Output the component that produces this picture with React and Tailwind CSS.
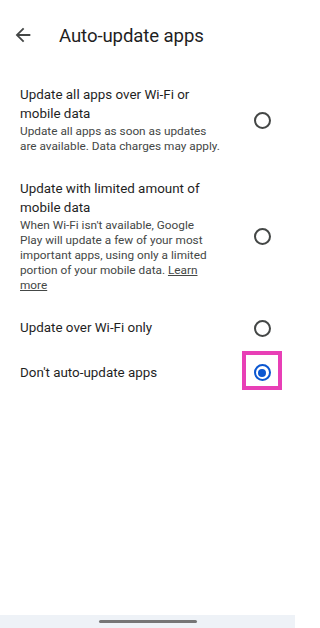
const options = [
  {
    title: ["Update all apps over Wi-Fi or", "mobile data"],
    sub: ["Update all apps as soon as updates", "are available. Data charges may apply."],
  },
  {
    title: ["Update with limited amount of", "mobile data"],
    sub: [
      "When Wi-Fi isn't available, Google",
      "Play will update a few of your most",
      "important apps, using only a limited",
      "portion of your mobile data.",
    ],
    learn: true,
  },
  { title: ["Update over Wi-Fi only"] },
  { title: ["Don't auto-update apps"], selected: true },
];

function Radio({ selected }) {
  if (selected) {
    return (
      <div className="relative flex h-[18px] w-[18px] items-center justify-center">
        <div className="flex h-[17px] w-[17px] items-center justify-center rounded-full border-2 border-[#0b57d0]">
          <div className="h-[8px] w-[8px] rounded-full bg-[#0b57d0]" />
        </div>
        {/* highlight box drawn over the selected radio */}
        <div className="absolute left-[-11px] top-[-13px] h-[39px] w-[40px] border-[4px] border-[#e83fb6]" />
      </div>
    );
  }
  return (
    <div className="flex h-[18px] w-[18px] items-center justify-center">
      <div className="h-[17px] w-[17px] rounded-full border-2 border-[#444746]" />
    </div>
  );
}

export default function App() {
  return (
    <div
      className="flex h-[628px] w-[295px] flex-col bg-white text-[#1f1f1f]"
      style={{ fontFamily: "Roboto, 'Noto Sans', Arial, sans-serif" }}
    >
      <div className="flex h-[73px] items-start gap-[25px] pl-[12px] pt-[24px]">
        <svg width="22" height="22" viewBox="0 0 24 24" fill="#444746">
          <path d="M20 11H7.83l5.59-5.59L12 4l-8 8 8 8 1.41-1.41L7.83 13H20v-2z" />
        </svg>
        <h1 className="text-[18.6px] leading-[24px] tracking-[-0.1px]">Auto-update apps</h1>
      </div>

      <div className="flex flex-col">
        {options.map((o, i) => (
          <div key={i} className="flex items-center py-[13px] pl-[20px] pr-[24px]">
            <div className="w-[210px] whitespace-nowrap">
              {o.title.map((t) => (
                <p key={t} className="text-[13.4px] leading-[18.5px]">{t}</p>
              ))}
              {o.sub && (
                <div className="mt-[1px] text-[11.8px] leading-[15px] text-[#444746]">
                  {o.sub.map((s, j) => (
                    <p key={j}>
                      {s}
                      {o.learn && j === o.sub.length - 1 && (
                        <>
                          {" "}
                          <span className="underline">Learn</span>
                        </>
                      )}
                    </p>
                  ))}
                  {o.learn && <p className="underline">more</p>}
                </div>
              )}
            </div>
            <div className="flex-1" />
            <Radio selected={o.selected} />
          </div>
        ))}
      </div>

      <div className="flex-1" />
      <div className="flex h-[13px] items-center justify-center bg-[#eef2f7]">
        <div className="h-[3px] w-[98px] rounded-full bg-[#767676]" />
      </div>
    </div>
  );
}
